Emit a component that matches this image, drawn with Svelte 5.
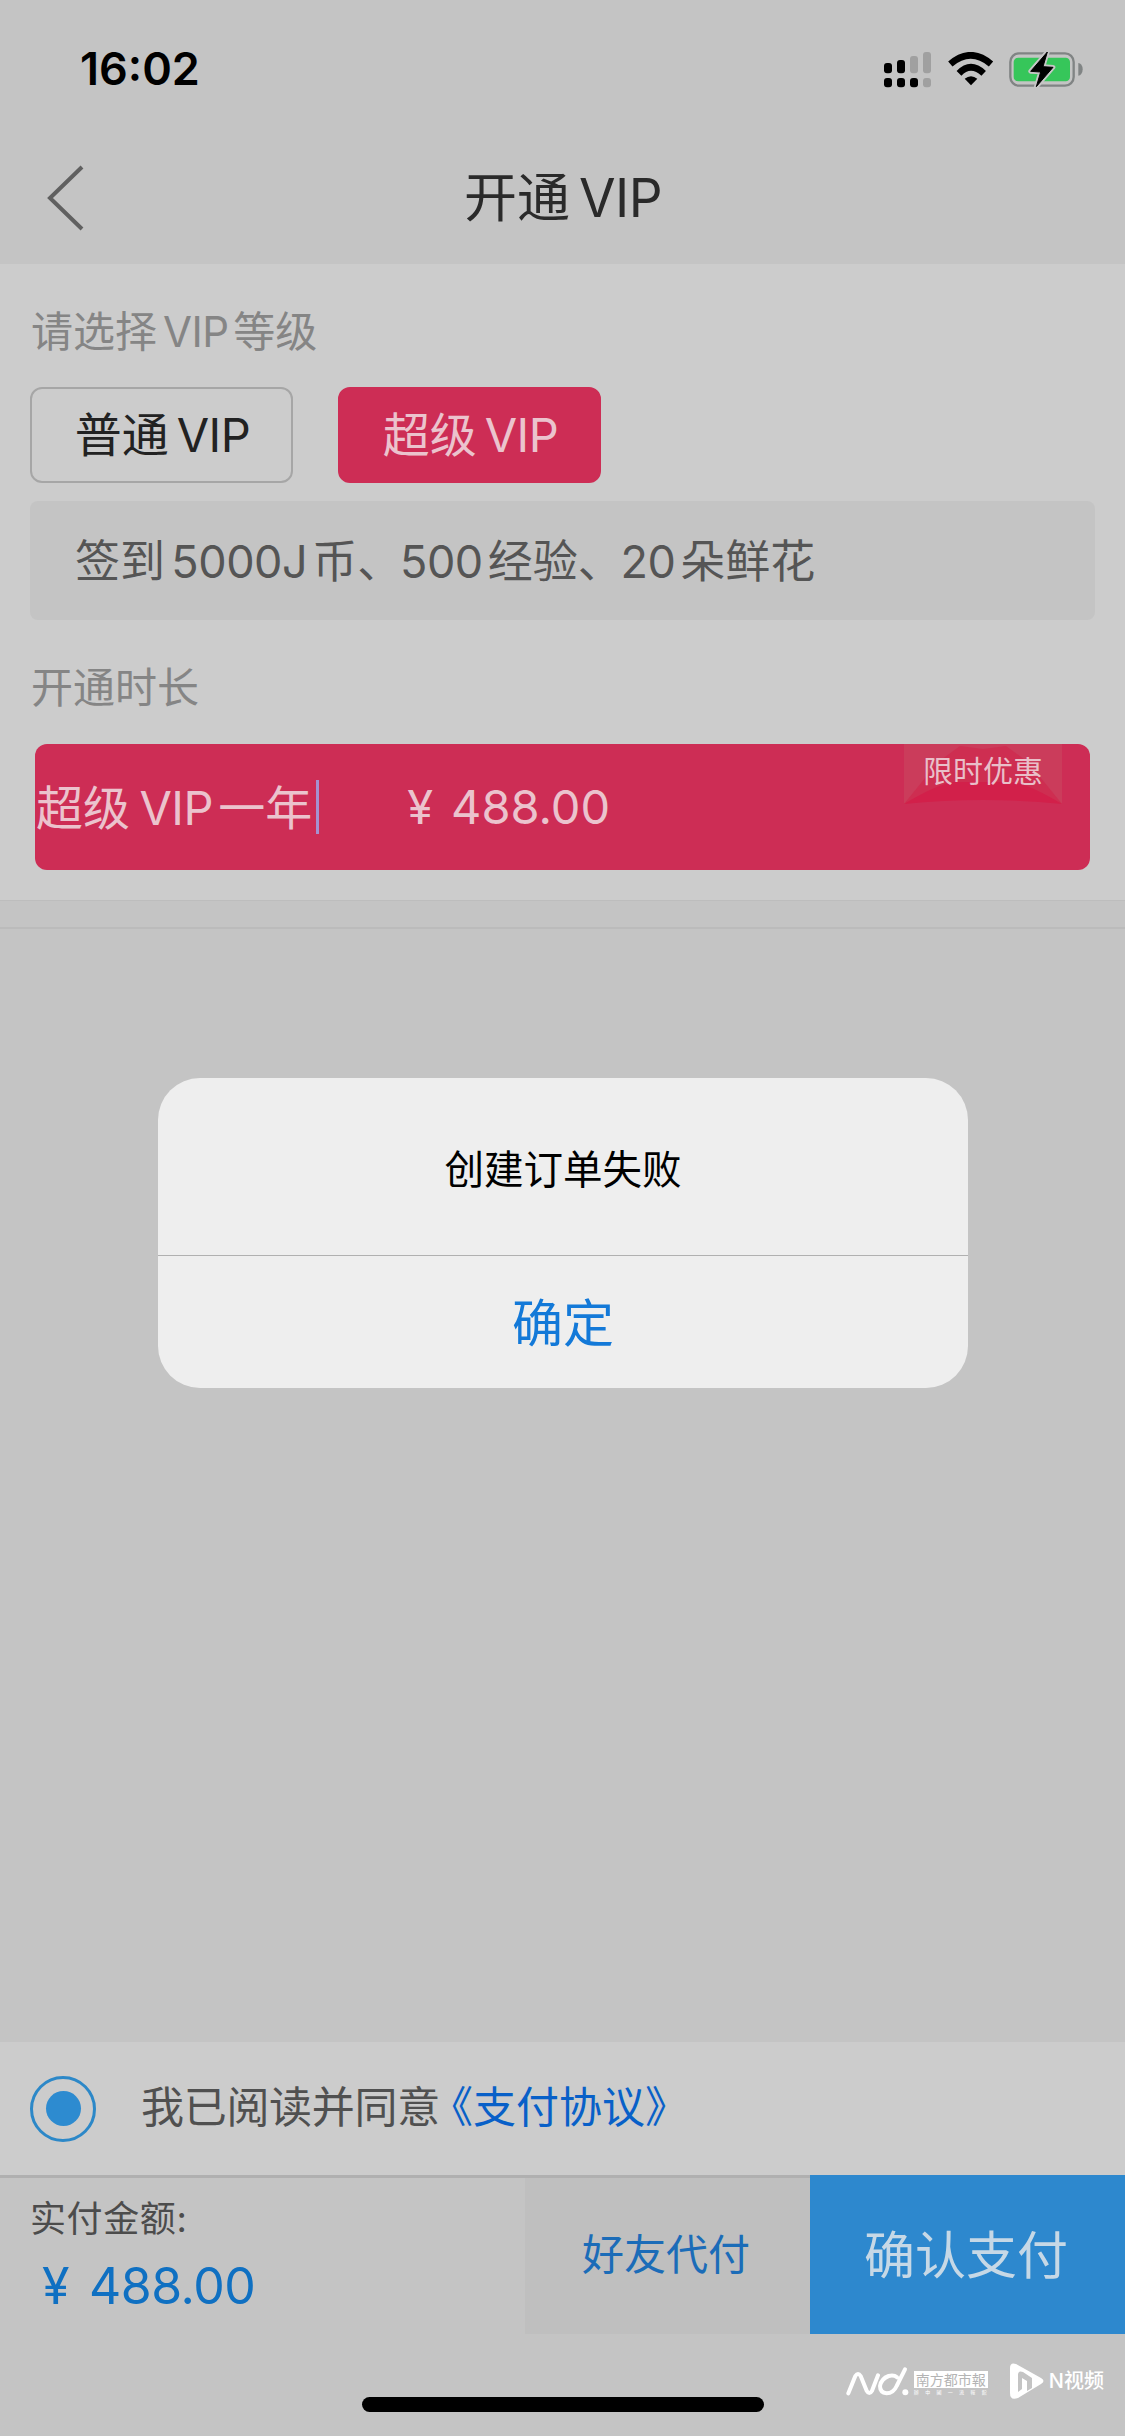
<script lang="ts">
  let levels = [
    { cn: "普通", active: false },
    { cn: "超级", active: true },
  ];
  let price = "488.00";
  let agreed = true;
</script>

<div class="page">
  <div class="status">
    <span class="time">16:02</span>
    <svg class="status-icons" viewBox="0 0 600 108">
      <g>
        <rect x="0" y="33" width="24" height="31" rx="9" />
        <rect x="39" y="24" width="24" height="40" rx="9" />
        <rect x="78" y="12" width="24" height="52" rx="9" fill="#a0a0a0" />
        <rect x="117" y="0" width="24" height="64" rx="9" fill="#a0a0a0" />
        <rect x="0" y="78" width="24" height="28" rx="9" />
        <rect x="39" y="78" width="24" height="28" rx="9" />
        <rect x="78" y="78" width="24" height="28" rx="9" />
        <rect x="117" y="78" width="24" height="28" rx="9" fill="#a0a0a0" />
      </g>
      <g fill="none" stroke="#000" stroke-width="20">
        <path d="M199 36 Q260 -16 321 36" />
        <path d="M225 64 Q260 28 299 64" />
      </g>
      <path d="M242 80 Q261 65 280 80 L261 100 Z" />
      <rect x="379" y="4" width="190" height="97" rx="26" fill="none" stroke="#808484" stroke-width="7" />
      <rect x="389" y="17" width="169" height="71" rx="13" fill="#36c65a" />
      <path d="M583 33 a13 19 0 0 1 0 38 Z" fill="#808484" />
      <path
        d="M490 0 L440 58 L470 60 L457 104 L507 46 L477 44 Z"
        stroke="#c6c6c6"
        stroke-width="14"
        stroke-linejoin="round"
      />
      <path
        d="M490 0 L440 58 L470 60 L457 104 L507 46 L477 44 Z"
        stroke="#000"
        stroke-width="3"
        stroke-linejoin="round"
      />
    </svg>
  </div>

  <header class="nav">
    <svg class="back" viewBox="0 0 40 68">
      <path d="M36 3 L4 34 L36 65" fill="none" stroke="#606060" stroke-width="4" />
    </svg>
    <h1>开通<i class="last">VIP</i></h1>
  </header>

  <section class="plans">
    <div class="label">请选择<i>VIP</i>等级</div>
    <div class="levels">
      {#each levels as level}
        <button class="level" class:active={level.active}>{level.cn}<i class="last">VIP</i></button>
      {/each}
    </div>
    <div class="benefit">签到<i>5000J</i>币、<i class="after-comma">500</i>经验、<i class="after-comma">20</i>朵鲜花</div>
    <div class="label duration">开通时长</div>
    <div class="plan">
      <span class="plan-name">超级<i>VIP</i>一年</span>
      <span class="caret"></span>
      <span class="plan-price"><b>¥</b>{price}</span>
      <div class="ribbon">
        <svg viewBox="0 0 158 62" preserveAspectRatio="none">
          <path d="M0 0 H158 V60 Q79 30 0 60 Z" fill="#cb3c5b" />
          <path d="M0 60 L34 18 L56 2 L79 5 L102 2 L124 18 L158 60 Q79 28 0 60 Z" fill="#cf2a4e" opacity=".75" />
          <path d="M0 60 Q30 42 48 38 H110 Q128 42 158 60 Q79 52 0 60 Z" fill="#d2204a" />
        </svg>
        <span>限时优惠</span>
      </div>
    </div>
  </section>
  <div class="divider"></div>

  <div class="spacer"></div>

  <div class="agree">
    <span class="radio" class:checked={agreed}></span>
    <span class="agree-text">我已阅读并同意</span>
    <span class="agreement">《支付协议》</span>
  </div>

  <footer class="pay">
    <div class="total">
      <span class="total-label">实付金额:</span>
      <span class="total-price"><b>¥</b>{price}</span>
    </div>
    <button class="friend">好友代付</button>
    <button class="confirm">确认支付</button>
  </footer>
  <div class="safe-area"></div>

  <div class="home-bar"></div>

  <div class="watermark">
    <svg class="nd" viewBox="48 46 192 90">
      <g fill="none" stroke="#fff" stroke-width="12" stroke-linecap="round" stroke-linejoin="round">
        <path d="M55 128 L76 76 Q84 64 92 76 L110 120 Q118 134 126 120 L144 74" />
        <path d="M201 80 Q192 72 176 76 Q154 84 150 106 Q150 126 170 128 Q190 128 200 106 L225 56" />
      </g>
      <circle cx="226" cy="125" r="9" fill="#fff" />
    </svg>
    <div class="paper">
      <span class="paper-name">南方都市報</span>
      <span class="paper-sub">辦中國一流報館</span>
    </div>
    <svg class="nv" viewBox="0 0 34 36">
      <path
        fill="#fff"
        fill-rule="evenodd"
        d="M0 5 Q0 -1 6 1 L31 15 Q36 18 31 21 L8 35 Q0 38 0 30 Z M8 12 V29 L12 26 V15 L17 18 V28 L22 25 V15 L13 9 Q8 7 8 12 Z"
      />
    </svg>
    <span class="nv-name">N视频</span>
  </div>

  <div class="alert">
    <div class="alert-message">创建订单失败</div>
    <button class="alert-ok">确定</button>
  </div>
</div>

<style>
  :global(body) {
    margin: 0;
    background: #c4c4c4;
  }

  .page {
    position: relative;
    display: flex;
    flex-direction: column;
    width: 1125px;
    height: 2436px;
    overflow: hidden;
    background: #c4c4c4;
    color: #2a2a2a;
    font-family: Inter, "Noto Sans CJK SC", sans-serif;
  }

  button {
    margin: 0;
    padding: 0;
    border: 0;
    box-sizing: border-box;
    background: none;
    color: inherit;
    font: inherit;
  }

  i {
    margin: 0 0.11em 0 0.14em;
    font-style: normal;
    letter-spacing: -0.01em;
  }

  i.last {
    margin-right: 0;
    margin-left: 0.17em;
  }

  i.after-comma {
    margin-left: -0.05em;
  }

  b {
    font-weight: 400;
  }

  .status {
    display: flex;
    justify-content: space-between;
    height: 132px;
    padding: 0 41px 0 80px;
    box-sizing: border-box;
  }

  .time {
    color: #000;
    font-size: 45px;
    font-weight: 600;
    line-height: 138px;
  }

  .status-icons {
    width: 200px;
    height: 36px;
    margin-top: 52px;
  }

  .nav {
    display: grid;
    grid-template-columns: 1fr auto 1fr;
    align-items: center;
    height: 132px;
    padding: 0 46px;
  }

  .back {
    width: 40px;
    height: 68px;
  }

  h1 {
    margin: 0;
    padding-left: 1px;
    color: #2a2a2a;
    font-size: 53px;
    font-weight: 400;
    line-height: 132px;
  }

  .plans {
    height: 636px;
    padding: 36px 30px 0;
    box-sizing: border-box;
    background: #cccccc;
  }

  .label {
    height: 64px;
    padding-left: 1px;
    color: #858585;
    font-size: 42px;
    line-height: 64px;
  }

  .levels {
    display: flex;
    gap: 45px;
    margin-top: 23px;
  }

  .level {
    width: 263px;
    height: 96px;
    padding-left: 2px;
    border: 2px solid #a6a6a6;
    border-radius: 12px;
    color: #222;
    font-size: 47px;
    line-height: 92px;
  }

  .level.active {
    border-color: #cd2d55;
    background: #cd2d55;
    color: #ebc3cd;
  }

  .benefit {
    height: 119px;
    margin-top: 18px;
    padding-left: 45px;
    border-radius: 8px;
    background: #c4c4c4;
    color: #555;
    font-size: 45px;
    line-height: 121px;
  }

  .duration {
    margin-top: 36px;
  }

  .plan {
    position: relative;
    display: flex;
    align-items: center;
    height: 126px;
    margin: 24px 5px 0;
    border-radius: 12px;
    background: #cd2d55;
    color: #ebc3cd;
    font-size: 47px;
  }

  .plan-name {
    padding: 0 0 6px 1px;
  }

  .plan-name i {
    margin-left: 0.2em;
  }

  .caret {
    width: 3px;
    height: 54px;
    margin-left: 4px;
    background: #a592d0;
  }

  .plan-price {
    margin-left: 88px;
    padding-bottom: 2px;
  }

  .plan-price b {
    margin-right: 18px;
  }

  .ribbon {
    position: absolute;
    top: 0;
    right: 28px;
    width: 158px;
    height: 62px;
    color: #e9bfc9;
    font-size: 30px;
    line-height: 54px;
    text-align: center;
  }

  .ribbon svg {
    position: absolute;
    top: 0;
    left: 0;
    width: 100%;
    height: 100%;
  }

  .ribbon span {
    position: relative;
  }

  .divider {
    height: 29px;
    border-top: 1px solid #bdbdbd;
    border-bottom: 2px solid #bbb;
    box-sizing: border-box;
  }

  .spacer {
    flex: 1;
  }

  .agree {
    display: flex;
    align-items: center;
    height: 133px;
    padding-left: 30px;
    background: #cccccc;
    font-size: 43px;
    line-height: 60px;
  }

  .radio {
    display: flex;
    align-items: center;
    justify-content: center;
    width: 66px;
    height: 66px;
    border: 3px solid #2c88c8;
    border-radius: 50%;
    box-sizing: border-box;
  }

  .radio.checked::after {
    content: "";
    width: 35px;
    height: 35px;
    border-radius: 50%;
    background: #2d8bd0;
  }

  .agree-text {
    margin-left: 45px;
    padding-bottom: 4px;
    color: #505050;
    letter-spacing: -0.3px;
  }

  .agreement {
    margin-left: -10px;
    padding-bottom: 4px;
    color: #0860c8;
  }

  .pay {
    display: flex;
    height: 159px;
  }

  .total {
    display: flex;
    flex: 1;
    flex-direction: column;
    padding: 13px 0 0 30px;
    border-top: 3px solid #b0b0b0;
  }

  .total-label {
    height: 56px;
    color: #4c4c4c;
    font-size: 36px;
    letter-spacing: 0.6px;
    line-height: 56px;
  }

  .total-price {
    padding-left: 12px;
    color: #0f70c2;
    font-size: 50px;
    letter-spacing: -0.5px;
    line-height: 79px;
  }

  .total-price b {
    margin-right: 20px;
  }

  .friend {
    width: 285px;
    padding: 0 3px 9px 0;
    border-top: 3px solid #b0b0b0;
    background: #bfbfbf;
    color: #1b6cb8;
    font-size: 42px;
  }

  .confirm {
    width: 315px;
    padding: 0 3px 6px 0;
    background: #2d88ce;
    color: #c6d8e6;
    font-size: 51px;
  }

  .safe-area {
    height: 102px;
  }

  .home-bar {
    position: absolute;
    bottom: 24px;
    left: 362px;
    width: 402px;
    height: 15px;
    border-radius: 8px;
    background: #000;
  }

  .watermark {
    position: absolute;
    right: 21px;
    bottom: 37px;
    display: flex;
    align-items: center;
    height: 36px;
    color: #fff;
  }

  .nd {
    width: 64px;
    height: 30px;
  }

  .paper {
    display: flex;
    flex-direction: column;
    width: 74px;
    margin: 4px 22px 0 4px;
  }

  .paper-name {
    height: 17px;
    background: #fff;
    color: #b4b4b4;
    font-size: 14px;
    line-height: 17px;
    text-align: center;
  }

  .paper-sub {
    height: 8px;
    font-size: 5px;
    letter-spacing: 6.3px;
    line-height: 9px;
    white-space: nowrap;
  }

  .nv {
    width: 34px;
    height: 36px;
  }

  .nv-name {
    margin-left: 5px;
    font-size: 20px;
    font-weight: 500;
    line-height: 36px;
  }

  .alert {
    position: absolute;
    top: 1078px;
    left: 158px;
    display: flex;
    flex-direction: column;
    width: 810px;
    height: 310px;
    border-radius: 42px;
    background: #eeeeee;
    text-align: center;
  }

  .alert-message {
    height: 177px;
    border-bottom: 1px solid #b0b0b0;
    color: #000;
    font-size: 39.5px;
    line-height: 184px;
  }

  .alert-ok {
    flex: 1;
    padding-bottom: 5px;
    color: #1379d8;
    font-size: 51px;
  }
</style>
